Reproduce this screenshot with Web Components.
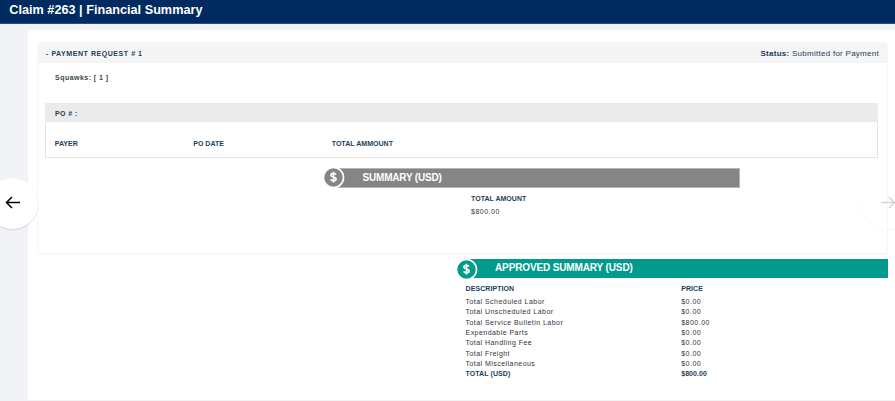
<!DOCTYPE html>
<html lang="en">
<head>
<meta charset="utf-8">
<title>Claim #263 | Financial Summary</title>
<style>
body { margin: 0; height: 401px; overflow: hidden; background: #f2f3f6; font-family: "Liberation Sans", Arial, sans-serif; }
</style>
</head>
<body>
<claim-page></claim-page>
<script>
const define = (name, html, setup) => {
  const template = document.createElement('template');
  template.innerHTML = html;
  customElements.define(name, class extends HTMLElement {
    connectedCallback() {
      if (this.shadowRoot) return;
      const root = this.attachShadow({ mode: 'open' });
      root.append(template.content.cloneNode(true));
      if (setup) setup(this, root);
    }
  });
};

define('page-header', `
<style>
:host { display: block; box-sizing: border-box; height: 24px; padding: 3px 9.3px 0; background: #002b61; border-bottom: 1px solid #29507f;
  color: #fff; font: bold 12.65px/15px "Liberation Sans", Arial, sans-serif; letter-spacing: .02px; white-space: nowrap; }
</style><slot></slot>`);

define('payment-card', `
<style>
:host { display: block; box-sizing: border-box; height: 212px; border: 1px solid #f7f7f7; border-top: 0; border-radius: 4px; background: #fff; box-shadow: 0 1px 1px #f7f7f7; color: #1d4059; }
header { display: flex; justify-content: space-between; align-items: center; box-sizing: border-box; height: 21px; padding: 2px 8px 0 8px; border-radius: 4px 4px 0 0; background: #f5f5f5; white-space: nowrap; }
.title { font: bold 7px/9px "Liberation Sans", Arial, sans-serif; letter-spacing: .56px; }
.status { font: 8px/10px "Liberation Sans", Arial, sans-serif; letter-spacing: .27px; }
</style>
<header><span class="title"><slot name="title"></slot></span><span class="status"><slot name="status"></slot></span></header>
<slot></slot>`);

define('squawk-line', `
<style>:host { display: block; box-sizing: border-box; padding: 10px 0 0 17px; height: 40px; color: #3d454d; font: bold 7px/9px "Liberation Sans", Arial, sans-serif; letter-spacing: .47px; }</style>
<slot></slot>`);

define('po-table', `
<style>
:host { display: block; box-sizing: border-box; height: 55px; margin: 0 9px 0 7px; border: 1px solid #e4e4e4; border-top: 0; color: #1d4059; font: bold 7px/9px "Liberation Sans", Arial, sans-serif; }
.head { height: 19px; box-sizing: border-box; margin: 0 -1px; padding: 6px 0 0 10px; background: #ebebeb; letter-spacing: .42px; }
.cols { display: grid; grid-template-columns: 138.5px 138.5px 1fr; padding: 17px 0 0 8.7px; letter-spacing: .04px; }
</style>
<div class="head"><slot></slot></div>
<div class="cols"><slot name="payer"></slot><slot name="date"></slot><slot name="total"></slot></div>`);

define('summary-banner', `
<style>
:host { display: flex; align-items: center; position: relative; box-sizing: border-box; height: 19px; padding: 0 0 var(--lift, 0) 28.5px; background: var(--tone); color: #fff;
  font: bold 10px/12px "Liberation Sans", Arial, sans-serif; letter-spacing: var(--track); white-space: nowrap; }
svg { position: absolute; left: -12px; top: var(--disc-top); width: 23px; height: 23px; }
</style>
<svg viewBox="0 0 23 23"><circle cx="11.5" cy="11.5" r="10.8" fill="#fff"/><circle cx="11.5" cy="11.5" r="9.2" fill="var(--tone)"/>
<path d="M14 8.7C13.5 7.8 12.6 7.4 11.4 7.4C10 7.4 8.9 8 8.9 9.2C8.9 11.8 14 10.2 14 13C14 14.3 12.8 14.8 11.5 14.8C10.1 14.8 9.2 14.3 8.7 13.3M11.5 5.8V16.6" fill="none" stroke="#fff" stroke-width="1.6"/></svg>
<span><slot></slot></span>`);

define('amount-block', `
<style>:host { display: block; color: #30343b; font: 7px/9px "Liberation Sans", Arial, sans-serif; letter-spacing: .5px; }
b { display: block; color: #1d4059; letter-spacing: .03px; margin-bottom: 4px; }</style>
<b><slot name="label"></slot></b><slot></slot>`);

define('price-row', `
<style>
:host { display: grid; grid-template-columns: 215.7px 1fr; height: 10.3px; color: #30343b; font: 7px/10.3px "Liberation Sans", Arial, sans-serif; letter-spacing: .46px; }
.price { letter-spacing: .5px; }
:host([heading]), :host([total]) { color: #1d4059; font-weight: bold; letter-spacing: .08px; }
:host([heading]) { height: 13.2px; }
:host([heading]) .price, :host([total]) .price { letter-spacing: .07px; }
</style><span></span><span class="price"></span>`, (el, root) => {
  const [name, price] = root.querySelectorAll('span');
  name.textContent = el.getAttribute('name');
  price.textContent = el.getAttribute('price');
});

define('nav-arrow', `
<style>
:host { display: block; position: absolute; top: 178px; width: 51px; height: 51px; border-radius: 50%; background: #fff; box-shadow: 0 1px 2px rgba(0,0,0,.14); }
:host([side=left]) { left: -13px; }
:host([side=right]) { left: 862px; opacity: .16; }
:host([side=right]) svg { transform: scaleX(-1); left: 17.5px; }
svg { position: absolute; left: 17.5px; top: 17px; width: 16px; height: 15px; }
</style>
<svg viewBox="0 0 16 15"><path d="M15 7.5H1.5M7 2L1.5 7.5L7 13" fill="none" stroke="#000" stroke-width="1.5"/></svg>`);

define('claim-page', `
<style>
:host { display: block; position: relative; height: 401px; overflow: hidden; }
main { display: block; box-sizing: border-box; margin: 6px 0 0 28px; padding: 12px 7px 0 9px; height: 370px; background: #fff; box-shadow: 0 1px #f3f3f3; }
.gray { --tone: #858585; --track: -.195px; --disc-top: -3px; margin: 10px 147px 0 296px; height: 20px; border: 0 solid #b5b5b5; border-width: 1px 1px 1px 0; }
.green { --tone: #009b8c; --track: -.131px; --lift: 1px; --disc-top: -1.5px; margin: 5px 0 0 429.5px; }
amount-block { margin: 6px 0 0 433px; }
.prices { margin: 6px 0 0 428.5px; }
</style>
<page-header>Claim #263 | Financial Summary</page-header>
<main>
  <payment-card>
    <span slot="title">- PAYMENT REQUEST # 1</span>
    <span slot="status"><b>Status:</b> Submitted for Payment</span>
    <squawk-line>Squawks: [ 1 ]</squawk-line>
    <po-table>PO # :<span slot="payer">PAYER</span><span slot="date">PO DATE</span><span slot="total">TOTAL AMMOUNT</span></po-table>
    <summary-banner class="gray">SUMMARY (USD)</summary-banner>
    <amount-block><span slot="label">TOTAL AMOUNT</span>$800.00</amount-block>
  </payment-card>
  <summary-banner class="green">APPROVED SUMMARY (USD)</summary-banner>
  <div class="prices">
    <price-row heading name="DESCRIPTION" price="PRICE"></price-row>
    <price-row name="Total Scheduled Labor" price="$0.00"></price-row>
    <price-row name="Total Unscheduled Labor" price="$0.00"></price-row>
    <price-row name="Total Service Bulletin Labor" price="$800.00"></price-row>
    <price-row name="Expendable Parts" price="$0.00"></price-row>
    <price-row name="Total Handling Fee" price="$0.00"></price-row>
    <price-row name="Total Freight" price="$0.00"></price-row>
    <price-row name="Total Miscellaneous" price="$0.00"></price-row>
    <price-row total name="TOTAL (USD)" price="$800.00"></price-row>
  </div>
</main>
<nav-arrow side="left"></nav-arrow>
<nav-arrow side="right"></nav-arrow>`);
</script>
</body>
</html>
